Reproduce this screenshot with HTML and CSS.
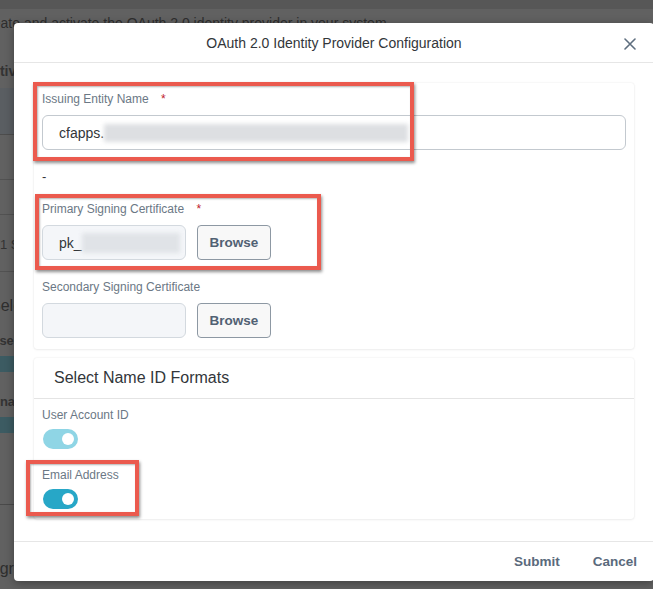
FILE: index.html
```html
<!DOCTYPE html>
<html lang="en">
<head>
<meta charset="utf-8">
<title>OAuth 2.0 Identity Provider Configuration</title>
<link rel="stylesheet" href="styles.css">
</head>
<body>
<main class="page">
  <div class="page-topbar"></div>
  <p class="page-intro">Create and activate the OAuth 2.0 identity provider in your system.</p>
  <h2 class="page-tab">Activation</h2>
  <div class="page-band"></div>
  <div class="page-row"></div>
  <div class="page-row short"></div>
  <div class="page-row cell">1 Signing Certificate</div>
  <p class="page-text">Select Name ID Formats</p>
  <p class="page-bold">User Account ID</p>
  <div class="page-toggle"></div>
  <p class="page-bold second">Username</p>
  <div class="page-toggle"></div>
  <div class="page-rule"></div>
  <p class="page-text last">Integration</p>
</main>

<section class="dialog" role="dialog" aria-label="OAuth 2.0 Identity Provider Configuration">
  <header class="dialog-head">
    <h1 class="dialog-title">OAuth 2.0 Identity Provider Configuration</h1>
    <button class="dialog-close" aria-label="Close">
      <svg width="12" height="12" viewBox="0 0 12 12"><path d="M1 1 L11 11 M11 1 L1 11" stroke="#5e6e7f" stroke-width="1.6" stroke-linecap="round" fill="none"/></svg>
    </button>
  </header>

  <div class="dialog-body">
    <div class="card">
      <div class="field">
        <label class="field-label">Issuing Entity Name <span class="req">*</span></label>
        <div class="input input-wide"><span class="val">cfapps.</span><span class="blur blur-long"></span></div>
      </div>
      <div class="dash">-</div>
      <div class="field">
        <label class="field-label">Primary Signing Certificate <span class="req">*</span></label>
        <div class="file-row">
          <div class="input input-file"><span class="val">pk_</span><span class="blur blur-short"></span></div>
          <button class="browse">Browse</button>
        </div>
      </div>
      <div class="field field-gap">
        <label class="field-label">Secondary Signing Certificate</label>
        <div class="file-row">
          <div class="input input-file"></div>
          <button class="browse">Browse</button>
        </div>
      </div>
    </div>

    <div class="card card-formats">
      <h2 class="card-title">Select Name ID Formats</h2>
      <div class="switch-field">
        <span class="field-label">User Account ID</span>
        <span class="switch switch-light"><span class="knob"></span></span>
      </div>
      <div class="switch-field field-gap2">
        <span class="field-label">Email Address</span>
        <span class="switch switch-on"><span class="knob"></span></span>
      </div>
    </div>
  </div>

  <footer class="dialog-foot">
    <button class="foot-btn">Submit</button>
    <button class="foot-btn">Cancel</button>
  </footer>
</section>

<div class="mark mark-issuing"></div>
<div class="mark mark-primary"></div>
<div class="mark mark-email"></div>
</body>
</html>
```

FILE: styles.css
```css
* { box-sizing: border-box; }

html, body {
  margin: 0;
  height: 100%;
}

body {
  background: #616161;
  font-family: "Liberation Sans", Arial, sans-serif;
  overflow: hidden;
  position: relative;
}

/* ---------- dimmed page behind the dialog ---------- */
.page {
  margin-left: -22px;
  width: 700px;
  color: #2c2c2c;
}
.page-topbar {
  height: 9px;
  background: #575757;
}
.page-intro {
  margin: 5px 0 0;
  font-size: 14px;
  line-height: 18px;
  color: #2e2e2e;
}
.page-tab {
  margin: 30px 0 0 4px;
  font-size: 14px;
  line-height: 18px;
  font-weight: bold;
  color: #333;
}
.page-band {
  margin-top: 8px;
  height: 47px;
  background: #5a5e62;
  border-bottom: 1px solid #4d4d4d;
}
.page-row {
  height: 45px;
  border-bottom: 1px solid #525252;
}
.page-row.short { height: 35px; }
.page-row.cell {
  height: 57px;
  padding: 22px 0 0 22px;
  font-size: 13px;
  color: #333;
}
.page-text {
  margin: 24px 0 0 12px;
  font-size: 16px;
  line-height: 20px;
  color: #2e2e2e;
}
.page-bold {
  margin: 17px 0 0 12px;
  font-size: 13px;
  font-weight: bold;
  line-height: 16px;
  color: #333;
}
.page-bold.second { margin: 22px 0 0 -7px; }
.page-toggle {
  margin: 7px 0 0 10px;
  width: 34px;
  height: 16px;
  border-radius: 8px;
  background: #3c5b62;
}
.page-rule {
  margin-top: 71px;
  border-top: 1px solid #4a4a4a;
}
.page-text.last {
  margin: 54px 0 0 -5px;
}

/* ---------- dialog ---------- */
.dialog {
  position: absolute;
  left: 14px;
  top: 23px;
  width: 640px;
  height: 558px;
  background: #fff;
  border-radius: 4px;
  box-shadow: 0 2px 10px rgba(0, 0, 0, 0.35);
  display: flex;
  flex-direction: column;
}

.dialog-head {
  height: 40px;
  border-bottom: 1px solid #e6e6e6;
  display: flex;
  align-items: center;
  justify-content: center;
  position: relative;
}
.dialog-title {
  margin: 0;
  font-size: 14px;
  font-weight: normal;
  color: #32363a;
}
.dialog-close {
  position: absolute;
  right: 18px;
  top: 15px;
  width: 12px;
  height: 12px;
  padding: 0;
  border: 0;
  background: none;
  display: flex;
}

.dialog-body {
  flex: 1;
  padding: 20px 20px 0;
  display: flex;
  flex-direction: column;
  gap: 9px;
}

.card {
  background: #fff;
  border-radius: 3px;
  box-shadow: 0 0 2px rgba(0, 0, 0, 0.1), 0 1px 3px rgba(0, 0, 0, 0.05);
  padding: 8px 8px 11px;
}

.field {
  display: flex;
  flex-direction: column;
  gap: 8px;
}
.field-gap { margin-top: 19px; }

.field-label {
  font-size: 12px;
  line-height: 16px;
  color: #6b7885;
}
.req {
  color: #c0212c;
  margin-left: 9px;
}

.input {
  height: 35px;
  border: 1px solid #c3c9cf;
  border-radius: 6px;
  display: flex;
  align-items: center;
  padding-left: 16px;
  font-size: 14px;
  color: #32363a;
}
.input-wide {
  background: #fff;
}
.input-file {
  width: 144px;
  background: #f4f6f9;
  border-color: #d3d9df;
}

.blur {
  display: block;
  flex: none;
  background: #dcdee1;
  filter: blur(2px);
}
.blur-long {
  width: 304px;
  height: 18px;
  background: #dddfe2;
}
.blur-short {
  width: 98px;
  height: 20px;
  background: #e0e3e7;
}

.dash {
  margin: 19px 0 16px;
  font-size: 13px;
  line-height: 16px;
  color: #32363a;
}

.file-row {
  display: flex;
  gap: 11px;
}

.browse {
  width: 74px;
  height: 35px;
  border: 1px solid #8d98a3;
  border-radius: 4px;
  background: #f8f8f8;
  font-family: inherit;
  font-size: 13.5px;
  font-weight: bold;
  color: #516173;
  padding: 0;
}

/* ---------- name ID formats ---------- */
.card-formats {
  padding: 0 8px 10px;
}
.card-title {
  margin: 0 -8px;
  height: 41px;
  border-bottom: 1px solid #e4e4e4;
  padding-left: 20px;
  display: flex;
  align-items: center;
  font-size: 16px;
  font-weight: normal;
  color: #32363a;
}
.switch-field {
  margin-top: 8px;
  display: flex;
  flex-direction: column;
  align-items: flex-start;
  gap: 6px;
}
.field-gap2 { margin-top: 18px; }

.switch {
  width: 35px;
  height: 20px;
  border-radius: 10px;
  display: flex;
  align-items: center;
  justify-content: flex-end;
  padding-right: 4px;
  margin-left: 1px;
}
.switch-light { background: #8fd5e5; }
.switch-on { background: #27a7c7; }
.knob {
  width: 12px;
  height: 12px;
  border-radius: 50%;
  background: #fff;
}

/* ---------- footer ---------- */
.dialog-foot {
  height: 40px;
  border-top: 1px solid #e6e6e6;
  display: flex;
  align-items: center;
  justify-content: flex-end;
  gap: 33px;
  padding-right: 17px;
}
.foot-btn {
  border: 0;
  background: none;
  padding: 0;
  font-family: inherit;
  font-size: 13.5px;
  font-weight: bold;
  color: #5a6a7c;
}

/* ---------- red annotation frames (drawn over the dialog) ---------- */
.mark {
  position: absolute;
  border: 4px solid #eb5a4e;
  box-shadow: 1px 2px 3px rgba(0, 0, 0, 0.45), inset 1px 1px 2px rgba(0, 0, 0, 0.3);
}
.mark-issuing { left: 33px; top: 82px; width: 381px; height: 79px; }
.mark-primary { left: 35px; top: 194px; width: 286px; height: 76px; }
.mark-email { left: 26px; top: 460px; width: 113px; height: 56px; }
```
